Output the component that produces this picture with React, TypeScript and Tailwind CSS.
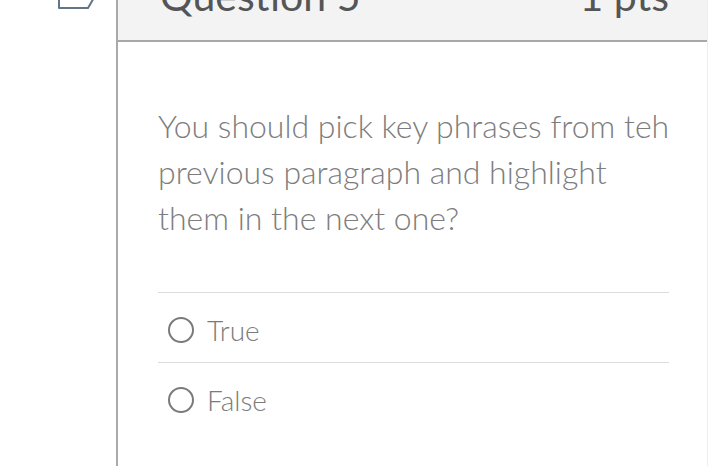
const answers = ['True', 'False'];

const FlagIcon = () => (
  <svg width="44" height="12" viewBox="0 0 44 12" className="ml-[56px] block">
    <path d="M3 -10 V8 H32 L39 -4" fill="none" stroke="#647487" strokeWidth="2" strokeLinejoin="round" />
  </svg>
);

const Answer = ({ label }: { label: string }) => (
  <label className="flex h-[70px] items-start border-t border-[#dcdcdc] pt-[22px]">
    <span className="ml-[10px] mt-[2px] h-[26px] w-[26px] rounded-full border-[2.5px] border-[#7a7a7a]" />
    <span className="ml-[13px] text-[28px] leading-[30px] font-light text-[#7b7b7b]">{label}</span>
  </label>
);

export default function App() {
  return (
    <div className="flex h-[466px] w-[708px] overflow-hidden bg-white" style={{ fontFamily: 'Lato, "Open Sans", sans-serif' }}>
      <div className="w-[116px] shrink-0">
        <FlagIcon />
      </div>

      <div className="flex-1 border-l-2 border-r border-l-[#a9a9a9] border-r-[#eeeeee]">
        <div className="flex h-[42px] items-end justify-between overflow-hidden border-b-2 border-[#a8a8a8] bg-[#f3f3f3] pb-[24px] pl-[42px] pr-[38px]">
          <h2 className="whitespace-nowrap text-[41px] leading-[41px] text-[#555555]">Question 5</h2>
          <span className="whitespace-nowrap text-[41px] leading-[41px] text-[#555555]">1 pts</span>
        </div>

        <div className="pl-[40px] pr-[34px] pt-[61px]">
          <p className="text-[32px] leading-[46px] font-light text-[#7d7d7d]">
            You should pick key phrases from teh previous paragraph and highlight them in the next one?
          </p>

          <div className="mt-[51px] mr-[4px]">
            {answers.map((a) => (
              <Answer key={a} label={a} />
            ))}
          </div>
        </div>
      </div>
    </div>
  );
}
